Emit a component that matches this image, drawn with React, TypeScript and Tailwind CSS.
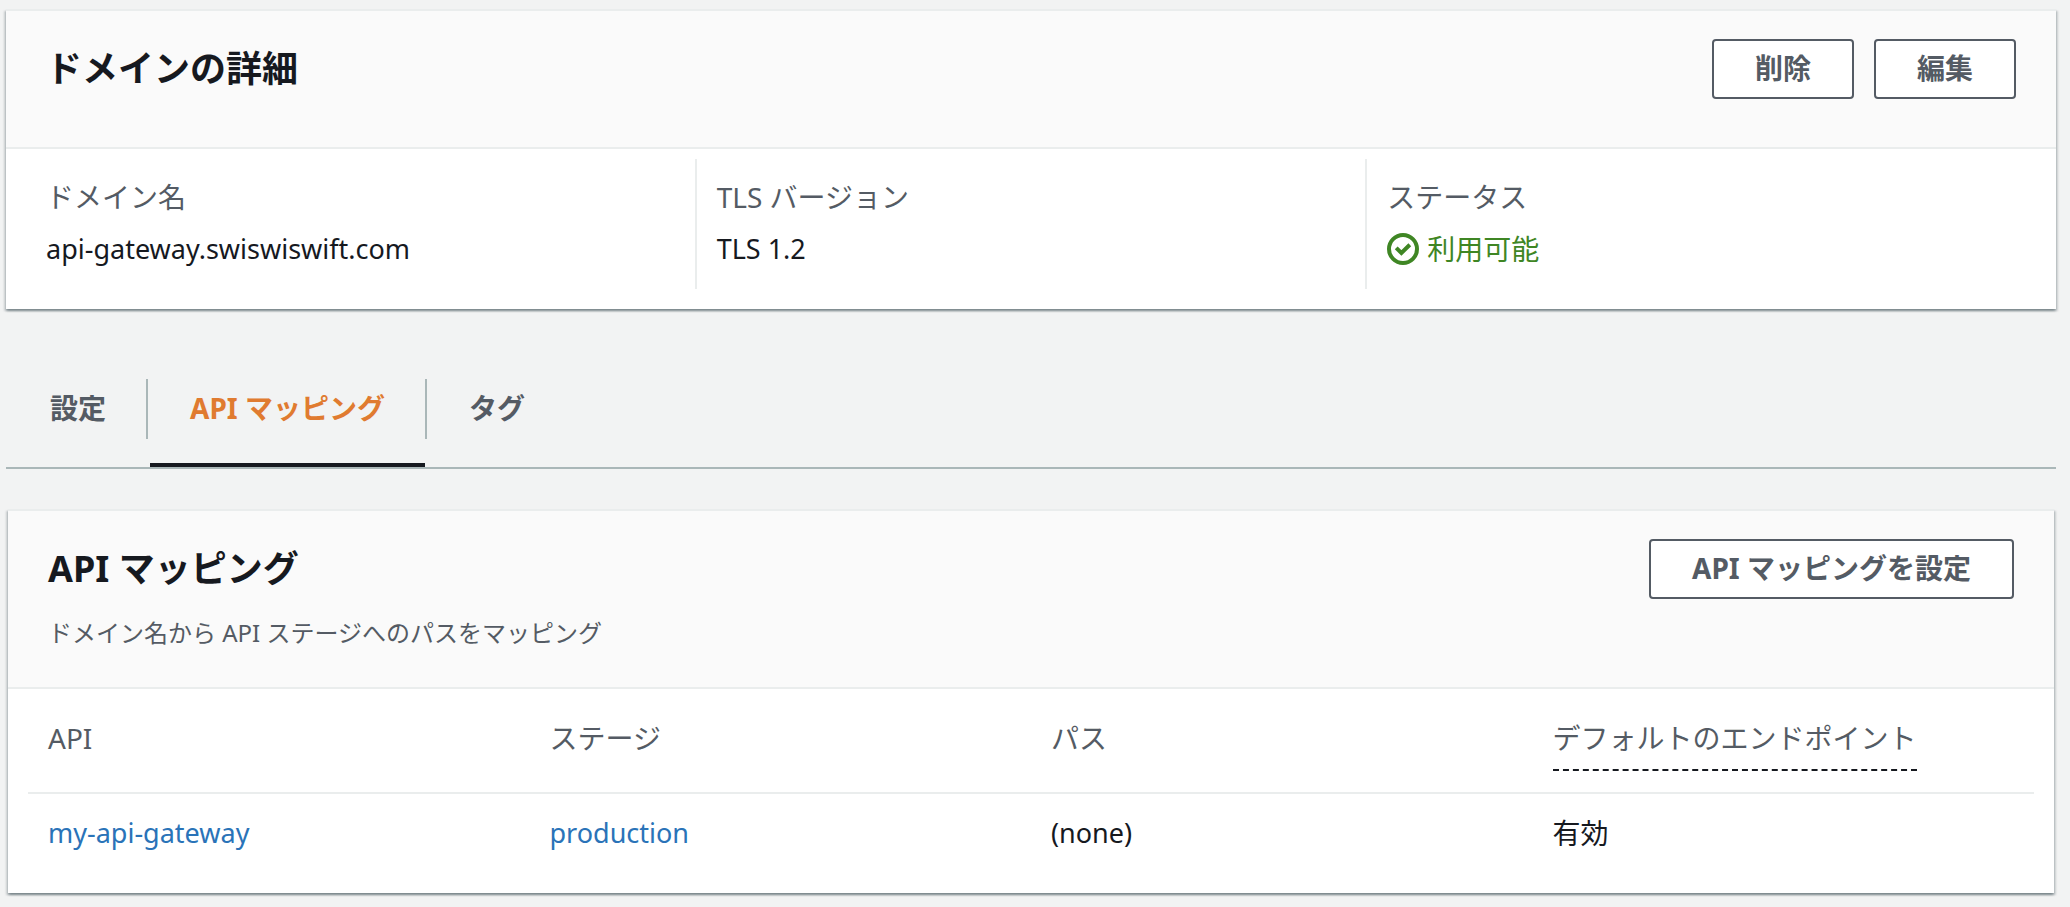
import type { ReactNode } from 'react';

type Mapping = {
  api: string;
  stage: string;
  path: string;
  defaultEndpoint: string;
};

const mappings: Mapping[] = [
  { api: 'my-api-gateway', stage: 'production', path: '(none)', defaultEndpoint: '有効' },
];

const tabs = [
  { id: 'settings', label: '設定' },
  { id: 'mappings', label: 'API マッピング' },
  { id: 'tags', label: 'タグ' },
];

const activeTab = 'mappings';

function Button({ children }: { children: ReactNode }) {
  return (
    <button
      type="button"
      className="h-[60px] rounded-sm border-2 border-[#545b64] bg-white px-[41px] pb-0.5 text-[28px] leading-8 font-bold whitespace-nowrap text-[#545b64]"
    >
      {children}
    </button>
  );
}

function Card({ title, description, actions, children }: {
  title: string;
  description?: string;
  actions: ReactNode;
  children: ReactNode;
}) {
  return (
    <section className="border-t-2 border-[#eaeded] bg-white shadow-[0_2px_2px_0_rgba(0,28,36,0.3),2px_2px_2px_0_rgba(0,28,36,0.15),-2px_2px_2px_0_rgba(0,28,36,0.15)]">
      <header className="flex items-start justify-between border-b-2 border-[#eaeded] bg-[#fafafa] px-10 pt-7 pb-8">
        <div>
          <h2 className="flex h-15 items-center text-4xl font-bold">{title}</h2>
          {description ? (
            <p className="mt-3 text-2xl leading-[44px] text-[#545b64]">{description}</p>
          ) : (
            <div className="h-4" />
          )}
        </div>
        <div className="flex gap-5">{actions}</div>
      </header>
      {children}
    </section>
  );
}

function Detail({ label, children }: { label: string; children: ReactNode }) {
  return (
    <div className="h-[130px] border-l-2 border-[#eaeded] px-5 pt-4 first:border-transparent">
      <dt className="text-[28px] leading-[44px] text-[#545b64]">{label}</dt>
      <dd className="mt-2 text-[27px] leading-[44px] font-[450]">{children}</dd>
    </div>
  );
}

function StatusIcon() {
  return (
    <svg viewBox="0 0 16 16" className="size-8" fill="none" stroke="currentColor" strokeWidth="2" aria-hidden="true">
      <circle cx="8" cy="8" r="7" />
      <path d="M4.6 7.4 7.2 10 11.4 5.9" />
    </svg>
  );
}

export default function App() {
  return (
    <main
      lang="ja"
      className="min-h-screen bg-[#f2f3f3] pt-[9px] pr-[14px] pb-3 pl-[6px] font-['Noto_Sans','Noto_Sans_CJK_JP',sans-serif] text-[#16191f]"
    >
      <Card
        title="ドメインの詳細"
        actions={
          <>
            <Button>削除</Button>
            <Button>編集</Button>
          </>
        }
      >
        <dl className="grid grid-cols-3 pt-[10px] pr-5 pb-5 pl-[18px]">
          <Detail label="ドメイン名">api-gateway.swiswiswift.com</Detail>
          <Detail label="TLS バージョン">TLS 1.2</Detail>
          <Detail label="ステータス">
            <span className="flex items-center gap-2 text-[28px] font-normal text-[#3f8624]">
              <StatusIcon />
              利用可能
            </span>
          </Detail>
        </dl>
      </Card>

      <div role="tablist" className="mt-[70px] flex gap-0.5 border-b-2 border-[#aab7b8] pl-1">
        {tabs.map((tab) => (
          <div key={tab.id} className="group flex items-start">
            <button
              type="button"
              role="tab"
              aria-selected={tab.id === activeTab}
              className="border-b-4 border-transparent px-10 pb-[26px] text-[28px] leading-[58px] font-bold text-[#545b64] aria-selected:border-[#16191f] aria-selected:text-[#e07b30]"
            >
              {tab.label}
            </button>
            <span className="h-15 w-0.5 bg-[#aab7b8] group-last:hidden" />
          </div>
        ))}
      </div>

      <div role="tabpanel" className="mt-10 px-0.5">
        <Card
          title="API マッピング"
          description="ドメイン名から API ステージへのパスをマッピング"
          actions={<Button>API マッピングを設定</Button>}
        >
          <div className="px-5 pb-5">
            <table className="w-full table-fixed text-left">
              <thead>
                <tr className="h-26 border-b-2 border-[#eaeded] align-top text-[28px] leading-[42px] text-[#545b64]">
                  <th className="px-5 pt-7 font-normal">API</th>
                  <th className="px-5 pt-7 font-normal">ステージ</th>
                  <th className="px-5 pt-7 font-normal">パス</th>
                  <th className="px-5 pt-7 font-normal">
                    <span className="inline-block border-b-2 border-dashed border-[#16191f] pb-[10px]">
                      デフォルトのエンドポイント
                    </span>
                  </th>
                </tr>
              </thead>
              <tbody>
                {mappings.map((mapping) => (
                  <tr key={mapping.api} className="h-20 text-[27px] leading-[44px] font-[450]">
                    <td className="px-5 pb-0.5">
                      <a href="#api" className="text-[#2a73b8]">{mapping.api}</a>
                    </td>
                    <td className="px-5 pb-0.5">
                      <a href="#stage" className="text-[#2a73b8]">{mapping.stage}</a>
                    </td>
                    <td className="px-5 pb-0.5">{mapping.path}</td>
                    <td className="px-5 pb-0.5 text-[28px] font-normal">{mapping.defaultEndpoint}</td>
                  </tr>
                ))}
              </tbody>
            </table>
          </div>
        </Card>
      </div>
    </main>
  );
}
